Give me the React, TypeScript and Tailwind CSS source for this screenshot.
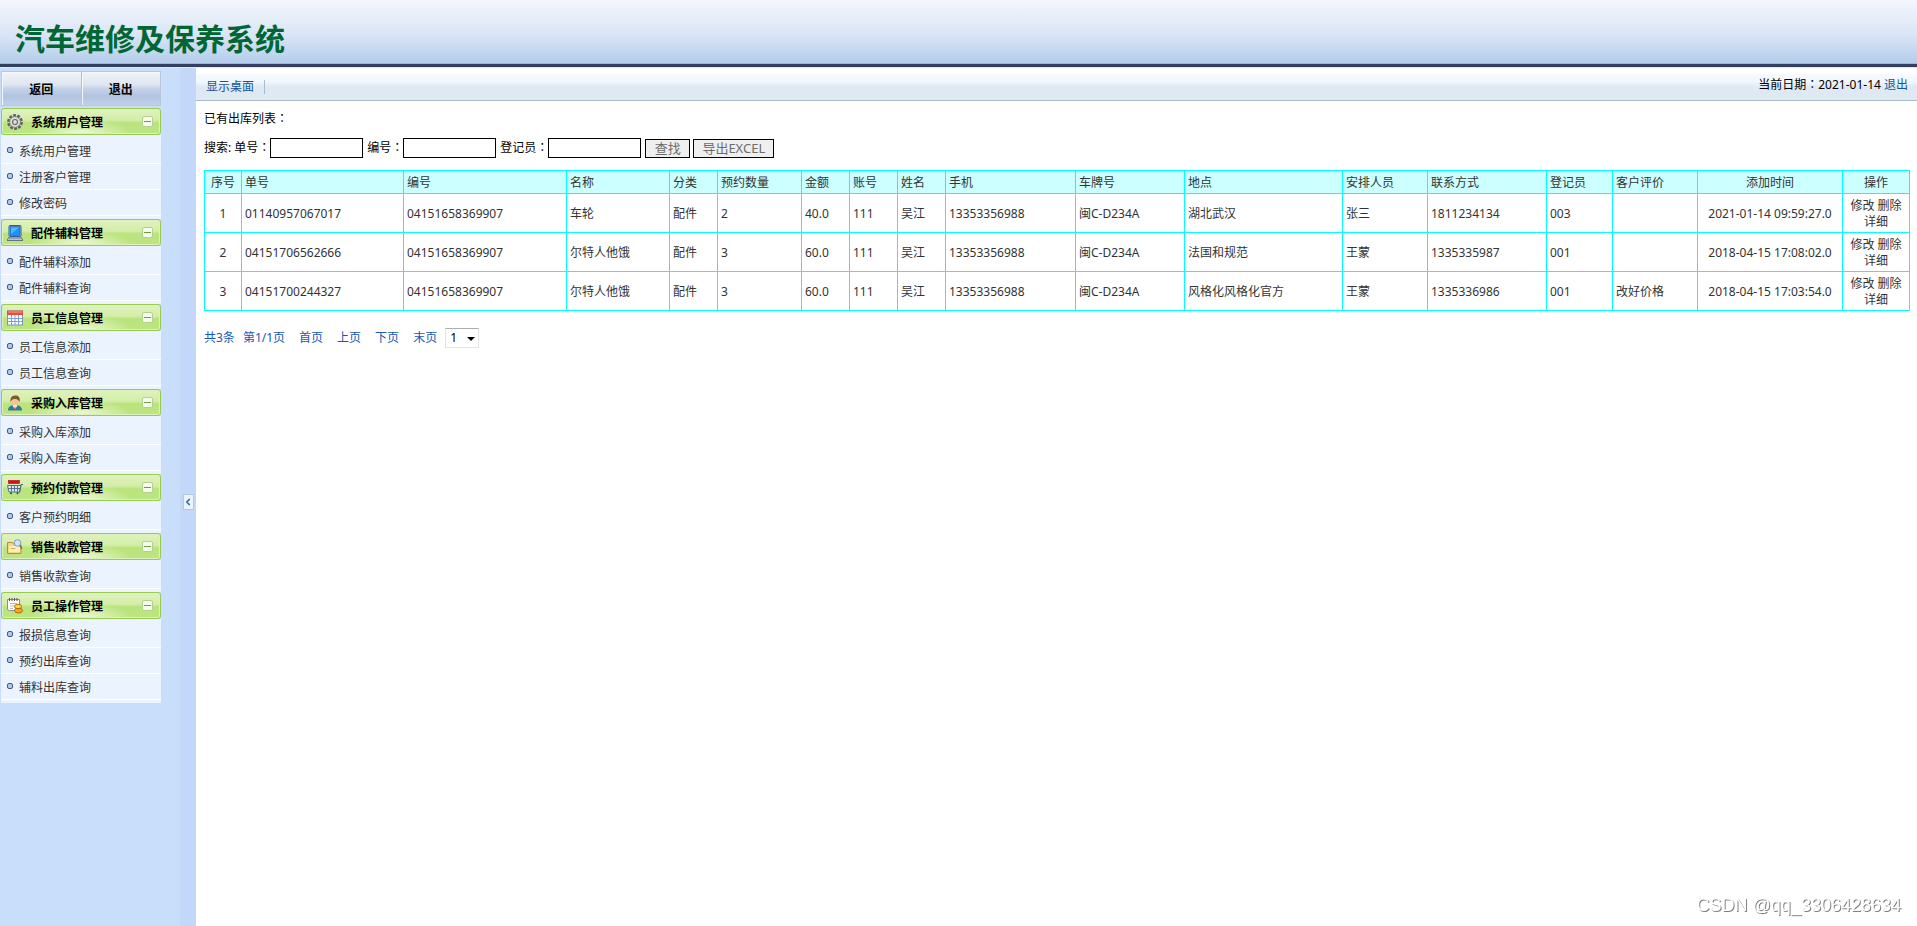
import { ChevronLeft } from "lucide-react";

type IconName = "gear" | "laptop" | "calendar" | "user" | "cart" | "search" | "coins";

type MenuGroup = {
  title: string;
  icon: IconName;
  items: string[];
};

const MENU: MenuGroup[] = [
  { title: "系统用户管理", icon: "gear", items: ["系统用户管理", "注册客户管理", "修改密码"] },
  { title: "配件辅料管理", icon: "laptop", items: ["配件辅料添加", "配件辅料查询"] },
  { title: "员工信息管理", icon: "calendar", items: ["员工信息添加", "员工信息查询"] },
  { title: "采购入库管理", icon: "user", items: ["采购入库添加", "采购入库查询"] },
  { title: "预约付款管理", icon: "cart", items: ["客户预约明细"] },
  { title: "销售收款管理", icon: "search", items: ["销售收款查询"] },
  { title: "员工操作管理", icon: "coins", items: ["报损信息查询", "预约出库查询", "辅料出库查询"] },
];

const COLUMNS = [
  { label: "序号", className: "w-[37px] text-center" },
  { label: "单号", className: "w-[162px]" },
  { label: "编号", className: "w-[163px]" },
  { label: "名称", className: "w-[103px]" },
  { label: "分类", className: "w-[48px]" },
  { label: "预约数量", className: "w-[84px]" },
  { label: "金额", className: "w-[48px]" },
  { label: "账号", className: "w-[48px]" },
  { label: "姓名", className: "w-[48px]" },
  { label: "手机", className: "w-[130px]" },
  { label: "车牌号", className: "w-[109px]" },
  { label: "地点", className: "w-[158px]" },
  { label: "安排人员", className: "w-[85px]" },
  { label: "联系方式", className: "w-[119px]" },
  { label: "登记员", className: "w-[66px]" },
  { label: "客户评价", className: "w-[85px]" },
  { label: "添加时间", className: "w-[145px] text-center" },
  { label: "操作", className: "w-[67px] text-center" },
];

const ROWS = [
  ["1", "01140957067017", "04151658369907", "车轮", "配件", "2", "40.0", "111", "吴江", "13353356988", "闽C-D234A", "湖北武汉", "张三", "1811234134", "003", "", "2021-01-14 09:59:27.0"],
  ["2", "04151706562666", "04151658369907", "尔特人他饿", "配件", "3", "60.0", "111", "吴江", "13353356988", "闽C-D234A", "法国和规范", "王蒙", "1335335987", "001", "", "2018-04-15 17:08:02.0"],
  ["3", "04151700244327", "04151658369907", "尔特人他饿", "配件", "3", "60.0", "111", "吴江", "13353356988", "闽C-D234A", "风格化风格化官方", "王蒙", "1335336986", "001", "改好价格", "2018-04-15 17:03:54.0"],
];

function MenuIcon({ name }: { name: IconName }) {
  return (
    <svg viewBox="0 0 16 16" className="h-4 w-4 shrink-0" aria-hidden="true">
      {name === "gear" && (
        <>
          <circle cx="8" cy="8" r="6.6" fill="none" stroke="#5f5f64" strokeWidth="2.6" strokeDasharray="2.8 1.35" />
          <circle cx="8" cy="8" r="5.4" fill="#dcdcdf" stroke="#77777c" strokeWidth="0.8" />
          <circle cx="8" cy="8" r="2.5" fill="#d3eab0" stroke="#6a6a6f" strokeWidth="1.2" />
        </>
      )}
      {name === "laptop" && (
        <>
          <rect x="2" y="0.5" width="12" height="11" rx="1" fill="#e8eef6" stroke="#2f5f9e" />
          <rect x="3" y="1.5" width="10" height="9" fill="#1b93ff" stroke="#1c4f94" strokeWidth="0.6" />
          <path d="M4 9 12 2.5H4z" fill="#58b6ff" />
          <path d="M2 12h12l2 3.5H0z" fill="#c9ced8" stroke="#4a5a7c" strokeWidth="0.8" />
          <path d="M2.5 13.7h11" stroke="#4a5a7c" strokeDasharray="1 1" />
        </>
      )}
      {name === "calendar" && (
        <>
          <rect x="0.5" y="1" width="15" height="14" fill="#fff" stroke="#7b93bd" />
          <rect x="0" y="0.5" width="16" height="4.5" fill="#e2513c" />
          <path d="M1 2h14" stroke="#f6a08f" />
          <path d="M1 8.5h14M1 11.5h14M4.5 5v10M8 5v10M11.5 5v10" stroke="#7fa0d6" />
        </>
      )}
      {name === "user" && (
        <>
          <path d="M1 15.5c0-4 3-5.5 7-5.5s7 1.5 7 5.5z" fill="#2f7d94" />
          <path d="M5.5 10h5L8 15z" fill="#fff" />
          <path d="M8 11l1 3.5-1 1-1-1z" fill="#d9402a" />
          <circle cx="8" cy="6.5" r="4" fill="#f5c493" />
          <path d="M3.5 7C3 2.5 5 .5 8.5.5s5 2.500 4 6.500c-1-2.500-3-3-5-3-2 0-3 1-4 3z" fill="#80582f" />
        </>
      )}
      {name === "cart" && (
        <>
          <rect x="1.5" y="0.5" width="11" height="3" fill="#d3121c" stroke="#a50d16" strokeWidth="0.6" />
          <path d="M0.5 5.5h13.500l-1.500 6.500H2z" fill="#dcebf7" stroke="#4f7391" />
          <path d="M1 8.5h12M4.5 5.5v6M7.5 5.5v6M10.5 5.5v6" stroke="#4f7391" />
          <path d="M16 4.5h-2l-1.500 8" fill="none" stroke="#4f6478" />
          <circle cx="4" cy="13.3" r="1" fill="#444" />
          <circle cx="10.5" cy="13.3" r="1" fill="#444" />
        </>
      )}
      {name === "search" && (
        <>
          <path d="M.5 3.5h5l1.500 2h7v9H.5z" fill="#f6d481" stroke="#b98a3a" />
          <path d="M2 7h11v6H2z" fill="#fdf0c0" />
          <path d="M3.5 9.5h5" stroke="#d9b25c" />
          <circle cx="10.5" cy="4" r="3.3" fill="#cfe6fa" stroke="#7d9cc0" />
          <path d="M12.8 6.5 15 9.5" stroke="#8a6b45" strokeWidth="1.5" />
        </>
      )}
      {name === "coins" && (
        <>
          <path d="M.5 1.5h12v11H2.500l-2-1z" fill="#fff" stroke="#8b8b95" />
          <path d="M2.5 0v3M5 0v3M7.5 0v3M10 0v3" stroke="#555" />
          <path d="M3 5.5h7M3 8h4M3 10.5h3" stroke="#b5bac6" />
          <ellipse cx="11.5" cy="12.5" rx="4" ry="2.5" fill="#f5a914" stroke="#b06a07" />
          <ellipse cx="11" cy="8.5" rx="3.5" ry="2.2" fill="#ffd84a" stroke="#b06a07" />
        </>
      )}
    </svg>
  );
}

function CollapseMark() {
  return (
    <span className="flex h-[11px] w-[11px] items-center justify-center rounded-[2px] border border-[#b5cf92] bg-[#f6fbec]">
      <span className="h-px w-[7px] bg-[#6f9a48]" />
    </span>
  );
}

// Full-width colon centred in its cell
function Colon() {
  return <span className="font-['Noto_Sans_CJK_TC',sans-serif] leading-none">：</span>;
}

function SidebarGroup({ group }: { group: MenuGroup }) {
  return (
    <section>
      <button
        type="button"
        className="flex h-[27px] w-full items-center rounded-[3px] border border-[#97cb51] bg-[radial-gradient(ellipse_at_50%_100%,#eef9d8_0%,transparent_45%),linear-gradient(to_bottom,#dff2bf_0%,#d3eda8_45%,#b9e47c_55%,#bde583_100%)] pr-[7px] pl-[5px] font-bold text-black shadow-[inset_0_0_0_1px_#dcf2b8]"
      >
        <MenuIcon name={group.icon} />
        <span className="ml-2 flex-1 pt-0.5 text-left">{group.title}</span>
        <CollapseMark />
      </button>
      <ul className="bg-[#ebf3ff] py-[3px]">
        {group.items.map((item) => (
          <li key={item} className="flex h-[26px] items-center border-b border-white pt-0.5 pl-1.5">
            <span className="mb-1 h-1.5 w-1.5 rounded-[2px] border border-[#46597a] bg-[#a8cbf7]" />
            <a href="#" className="ml-1.5 text-[#333]">
              {item}
            </a>
          </li>
        ))}
      </ul>
    </section>
  );
}

function Sidebar() {
  return (
    <aside className="flex w-[196px] shrink-0 bg-[#c9defb]">
      <div className="w-[161px] pt-[3px] pl-px">
        <div className="mb-0.5 flex h-[35px] border border-[#b9c6dc]">
          {["返回", "退出"].map((label) => (
            <button
              key={label}
              type="button"
              className="flex-1 border-r border-[#b3c0d6] bg-[linear-gradient(to_bottom,#f0f3f9_0%,#dfe6f1_38%,#c6d3e7_50%,#b1c4e0_72%,#c0d0e8_100%)] pt-0.5 font-bold text-black shadow-[inset_1px_1px_0_#f6f8fc] last:border-r-0"
            >
              {label}
            </button>
          ))}
        </div>
        {MENU.map((group) => (
          <SidebarGroup key={group.title} group={group} />
        ))}
      </div>
      <div className="ml-auto flex w-4 items-center justify-center bg-[#c3d8f8] pt-2.5">
        <button
          type="button"
          aria-label="收起菜单"
          className="flex h-4 w-[11px] items-center justify-center border border-[#b2c8e8] bg-[#eaf3ff] text-[#2d6aa8]"
        >
          <ChevronLeft className="h-2.5 w-2.5 shrink-0" strokeWidth={4} />
        </button>
      </div>
    </aside>
  );
}

function SearchField({ id, label }: { id: string; label: string }) {
  return (
    <>
      <label htmlFor={id}>
        {label}
        <Colon />
      </label>
      <input id={id} type="text" className="mr-1 h-5 w-[93px] border border-black bg-white px-1" />
    </>
  );
}

function Pagination() {
  return (
    <nav className="mt-4 flex h-5 items-center pt-0.5 text-[#1558b5]">
      <span>共3条</span>
      <span className="ml-2">第1/1页</span>
      {["首页", "上页", "下页", "末页"].map((label) => (
        <a key={label} href="#" className="ml-3.5">
          {label}
        </a>
      ))}
      <span className="relative ml-2">
        <select
          aria-label="页码"
          className="block h-5 w-[34px] appearance-none border border-[#e2e3ea] border-t-[#abadb3] bg-white pl-1 text-black"
        >
          <option>1</option>
        </select>
        <svg viewBox="0 0 8 4" className="pointer-events-none absolute top-[9px] right-1 h-1 w-2">
          <path d="M0 0h8L4 4z" fill="#000" />
        </svg>
      </span>
    </nav>
  );
}

function RecordTable() {
  return (
    <table className="w-full table-fixed border-collapse border border-[#00ffff] text-left text-[#333]">
      <thead>
        <tr className="h-[23px] bg-[#ccffff]">
          {COLUMNS.map((col) => (
            <th key={col.label} className={`border border-[#00ffff] px-[3px] pt-0.5 font-normal ${col.className}`}>
              {col.label}
            </th>
          ))}
        </tr>
      </thead>
      <tbody>
        {ROWS.map((row) => (
          <tr key={row[0]} className="h-[39px]">
            {row.map((cell, i) => (
              <td
                key={COLUMNS[i].label}
                className={`border border-[#00ffff] px-[3px] pt-0.5 whitespace-nowrap ${i === 0 || i === 16 ? "text-center" : ""}`}
              >
                {cell}
              </td>
            ))}
            <td className="border border-[#00ffff] px-[3px] pt-0.5 text-center">
              <a href="#">修改</a> <a href="#">删除</a> <a href="#">详细</a>
            </td>
          </tr>
        ))}
      </tbody>
    </table>
  );
}

export default function App() {
  return (
    <div className="flex min-h-screen flex-col bg-white font-['Noto_Sans','Noto_Sans_CJK_SC',sans-serif] text-[12px] leading-4 text-black">
      <header className="flex h-[68px] shrink-0 border-b border-[#dce9fa] bg-linear-to-b from-[#f3f6fb] via-[#dbe6f5] to-[#afcaea]">
        <div className="flex w-full items-center border-b-[3px] border-[#333f60] pl-[15px] shadow-[inset_0_-1px_0_#a3b3ca]">
          <h1 className="pt-3.5 text-[30px] leading-10 font-bold text-[#006633]">汽车维修及保养系统</h1>
        </div>
      </header>

      <div className="flex flex-1">
        <Sidebar />
        <main className="min-w-0 flex-1">
          <div className="mt-1.5 flex h-[27px] items-center border-b border-[#a9bccf] bg-linear-to-b from-[#f6fbff] from-0% via-[#f1f7fd] via-30% to-[#dfe9f4] to-50% pr-[9px] pl-2.5">
            <a href="#" className="text-[#15559a]">
              显示桌面
            </a>
            <span className="ml-2.5 h-3.5 w-px bg-[#a9bccf]" />
            <p className="ml-auto pb-1">
              当前日期
              <Colon />
              2021-01-14{" "}
              <a href="#" className="text-[#15559a]">
                退出
              </a>
            </p>
          </div>

          <div className="pt-2.5 pr-[7px] pl-2">
            <p className="mb-[11px]">
              已有出库列表
              <Colon />
            </p>
            <form className="mb-3 flex h-5 items-center">
              <span className="mr-[3px]">搜索:</span>
              <SearchField id="order-no" label="单号" />
              <SearchField id="item-no" label="编号" />
              <SearchField id="registrar" label="登记员" />
              <button type="button" className="mr-[3px] h-[19px] w-[45px] border border-black bg-[#efefef] text-[13px] text-[#6d6d6d]">
                查找
              </button>
              <button type="button" className="h-[19px] w-[81px] border border-black bg-[#efefef] text-[13px] text-[#6d6d6d]">
                导出EXCEL
              </button>
            </form>
            <RecordTable />
            <Pagination />
          </div>
        </main>
      </div>

      <p className="fixed right-4 bottom-[11px] font-['Liberation_Sans',sans-serif] text-[18px] leading-5 text-white [text-shadow:1px_1px_0_#808080]">
        CSDN @qq_3306428634
      </p>
    </div>
  );
}
